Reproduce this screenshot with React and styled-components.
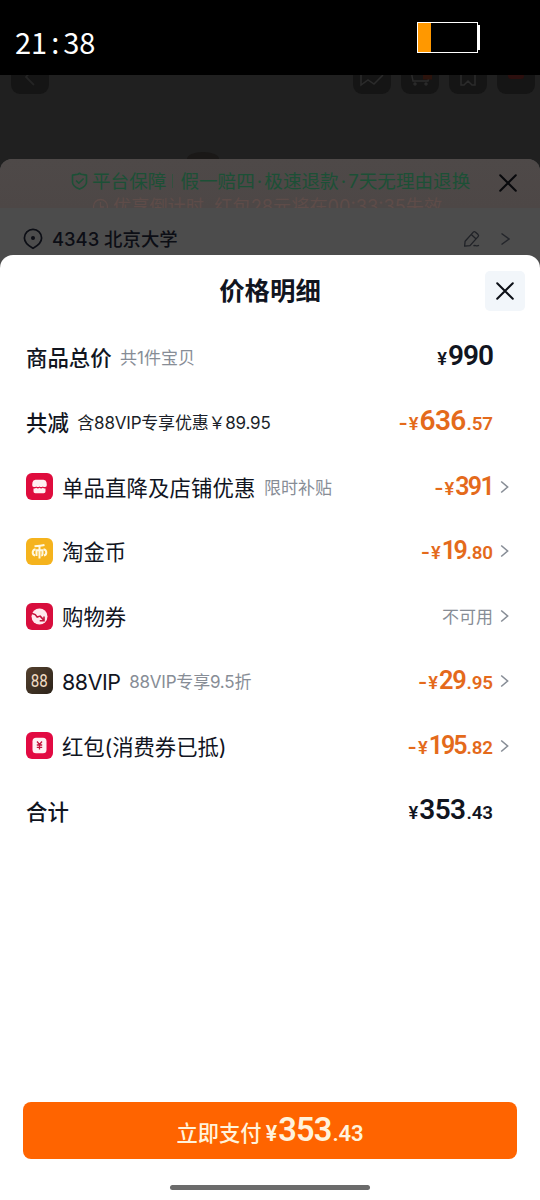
import React from "react"
import styled, { createGlobalStyle } from "styled-components"

const GlobalStyle = createGlobalStyle`
  * {
    box-sizing: border-box;
  }
  body {
    margin: 0;
    background: #000;
    font-family: Inter, "Noto Sans CJK SC", sans-serif;
  }
`

const Screen = styled.div`
  display: flex;
  flex-direction: column;
  width: 540px;
  height: 1200px;
  overflow: hidden;
  background: #202020;
`

const StatusBar = styled.header`
  display: flex;
  justify-content: space-between;
  flex: none;
  height: 75px;
  padding: 22px 60px 0 15px;
  background: #000;
`

const Clock = styled.div`
  display: flex;
  margin-top: -2px;
  color: #fff;
  font-family: "Noto Sans CJK SC", sans-serif;
  font-size: 29px;
  line-height: 42px;
`

const Colon = styled.span`
  width: 16px;
  text-align: center;
`

const Battery = styled.div`
  display: flex;
  align-items: center;
  height: 31px;
`

const BatteryBody = styled.div`
  width: 61px;
  height: 31px;
  border: 1px solid #fff;
`

const BatteryLevel = styled.div`
  width: 13px;
  height: 100%;
  background: #ff9800;
`

const BatteryCap = styled.div`
  width: 2px;
  height: 25px;
  background: #fff;
`

const NavBar = styled.div`
  display: flex;
  gap: 10px;
  flex: none;
  height: 77px;
  padding: 0 5px 0 11px;
`

const NavButton = styled.div`
  display: flex;
  align-items: flex-end;
  justify-content: center;
  width: 38px;
  height: 19px;
  padding-bottom: 7px;
  margin-right: ${({ $push }) => ($push ? "auto" : "0")};
  border-radius: 0 0 9px 9px;
  overflow: hidden;
  background: #151515;
  svg {
    flex: none;
  }
`

const ProductEdge = styled.div`
  flex: none;
  width: 32px;
  height: 7px;
  margin-left: 187px;
  border-radius: 16px 16px 0 0 / 7px 7px 0 0;
  background: #1a1817;
`

const OrderSheet = styled.section`
  display: flex;
  flex-direction: column;
  flex: 1;
  border-radius: 12px 12px 0 0;
  overflow: hidden;
  background: #4c4c4c;
`

const Guarantee = styled.div`
  display: flex;
  justify-content: space-between;
  flex: none;
  height: 49px;
  padding: 0 23px 0 70px;
  overflow: hidden;
  background: linear-gradient(#4e4948, #4d4746);
`

const GuaranteeLines = styled.div`
  white-space: nowrap;
`

const Promise = styled.div`
  display: flex;
  align-items: center;
  height: 34px;
  padding-top: 10px;
  color: #1c5036;
  font-size: 18.6px;
  line-height: 24px;
  svg {
    margin-right: 3px;
  }
`

const Dot = styled.span`
  width: 9.5px;
  text-align: center;
`

const Divider = styled.i`
  width: 1px;
  height: 14px;
  margin: 0 7px 0 6px;
  background: #33503f;
`

const Countdown = styled.div`
  display: flex;
  align-items: center;
  padding: 1px 0 0 22px;
  color: #5e4c49;
  font-size: 18.2px;
  line-height: 24px;
  svg {
    margin-right: 4px;
  }
`

const SheetClose = styled.div`
  display: flex;
  padding-top: 15px;
`

const Address = styled.div`
  display: flex;
  align-items: center;
  flex: none;
  height: 47px;
  padding: 14px 29px 0 23px;
  color: #0c0e15;
  font-size: 18.4px;
  font-weight: 500;
  line-height: 24px;
`

const AddressText = styled.span`
  flex: 1;
  margin-left: 9px;
`

const PriceSheet = styled.main`
  display: flex;
  flex-direction: column;
  flex: 1;
  border-radius: 13px 13px 0 0;
  background: #fff;
`

const TitleBar = styled.div`
  display: grid;
  grid-template-columns: 40px 1fr 40px;
  align-items: center;
  height: 69.6px;
  padding: 2px 15px 0;
`

const Title = styled.h1`
  grid-column: 2;
  margin: 1px 0 0;
  color: #11151f;
  font-size: 25.4px;
  font-weight: 600;
  line-height: 36px;
  text-align: center;
`

const CloseButton = styled.button`
  display: flex;
  align-items: center;
  justify-content: center;
  width: 40px;
  height: 40px;
  padding: 0;
  border: 0;
  border-radius: 5px;
  background: #f2f6fa;
`

const Row = styled.div`
  display: flex;
  align-items: center;
  height: 64.8px;
  padding: 0 31px 0 26px;
  white-space: nowrap;
`

const RowIcon = styled.div`
  display: flex;
  width: 27px;
  height: 27px;
  margin-right: 9px;
`

const Label = styled.span`
  margin-top: 2px;
  color: #11151f;
  font-size: 21.4px;
  font-weight: ${({ $bold }) => ($bold ? 500 : 400)};
  letter-spacing: ${({ $tight }) => $tight || 0}px;
  line-height: 30px;
`

const Note = styled.span`
  margin: 2px 0 0 8.5px;
  color: ${({ $dark }) => ($dark ? "#1b1f29" : "#878d96")};
  font-size: 17px;
  letter-spacing: ${({ $tight }) => $tight || 0}px;
  line-height: 26px;
`

const RowEnd = styled.div`
  display: flex;
  align-items: center;
  margin-left: auto;
`

const ChevronSlot = styled.span`
  display: flex;
  width: 16px;
  padding-left: 7px;
`

const Unavailable = styled.span`
  margin-top: 2px;
  color: #878d96;
  font-size: 17px;
  line-height: 26px;
`

const Amount = styled.span`
  display: flex;
  align-items: baseline;
  margin-top: 2px;
  color: ${({ $color }) => $color};
  font-family: Roboto, sans-serif;
  font-weight: 600;
  line-height: 32px;
`

const Minus = styled.span`
  margin-right: 1px;
  font-family: Inter, sans-serif;
  font-size: 20px;
  font-weight: 600;
`

const Yen = styled.span`
  margin-right: 1px;
  font-size: ${({ $size }) => $size}px;
`

const Whole = styled.span`
  font-size: ${({ $size }) => $size}px;
  letter-spacing: ${({ $tight }) => $tight}px;
`

const Cents = styled.span`
  margin-left: 1px;
  font-size: ${({ $size }) => $size}px;
  letter-spacing: -0.1px;
`

const Footer = styled.footer`
  display: flex;
  flex-direction: column;
  align-items: center;
  margin-top: auto;
  padding: 0 23px 10px;
`

const PayButton = styled.button`
  display: flex;
  align-items: center;
  justify-content: center;
  width: 100%;
  height: 57px;
  margin-bottom: 26px;
  padding: 0;
  border: 0;
  border-radius: 8px;
  background: #ff6400;
  color: #fff3dc;
`

const PayText = styled.span`
  margin: 2px 4px 0 0;
  font-family: "Noto Sans CJK SC", sans-serif;
  font-size: 21.3px;
  font-weight: 500;
  line-height: 30px;
`

const HomeIndicator = styled.div`
  width: 200px;
  height: 5px;
  border-radius: 3px;
  background: #6b6b6b;
`

const Cross = ({ size = 18, color = "#0d1017" }) => (
  <svg width={size} height={size} viewBox="0 0 18 18" fill="none" stroke={color} strokeWidth="2" strokeLinecap="round">
    <path d="M1.2 1.2l15.6 15.6M16.8 1.2L1.2 16.8" />
  </svg>
)

const Chevron = ({ width = 9, height = 14, color = "#878d96" }) => (
  <svg width={width} height={height} viewBox="0 0 9 14" fill="none" stroke={color} strokeWidth="1.6">
    <path d="M1.2 1.5L7.6 7l-6.4 5.5" />
  </svg>
)

const ShieldIcon = () => (
  <svg width="19" height="20" viewBox="0 0 19 20" fill="none" stroke="#1c5036" strokeWidth="1.6" strokeLinejoin="round">
    <path d="M9.5 2.2l1.6 1 5.4.9v7.2c0 3.4-3.4 5.3-7 6.8-3.6-1.5-7-3.4-7-6.8V4.1l5.4-.9z" />
    <path d="M6 9.5l2.8 2.7 4.8-4.7" />
  </svg>
)

const ClockIcon = () => (
  <svg width="17" height="17" viewBox="0 0 17 17" fill="none" stroke="#5e4c49" strokeWidth="1.3">
    <circle cx="8.5" cy="8.5" r="7" />
    <path d="M8.5 4v5H12" />
  </svg>
)

const PinIcon = () => (
  <svg width="20" height="22" viewBox="0 0 20 22" fill="none" stroke="#0c0e15" strokeWidth="1.7" strokeLinejoin="round">
    <path d="M10 20.3c-2-1.1-8.6-4.6-8.6-10.3a8.6 8.6 0 0117.2 0c0 5.7-6.6 9.2-8.6 10.3z" />
    <circle cx="10" cy="10" r="2" fill="#0c0e15" stroke="none" />
  </svg>
)

const EditIcon = () => (
  <svg width="18" height="18" viewBox="0 0 18 18" fill="none" stroke="#202227" strokeWidth="1.3" strokeLinejoin="round">
    <path d="M1.6 16.2l.5-5L10.3 2.1q1-1 2 0l2.8 2.5q1 1 0 2L7 15.6z" />
    <path d="M8.3 4.5l4.6 4.2M10.5 16c1.5-1.5 2.5.8 5.5-.6" />
  </svg>
)

const StoreBadge = () => (
  <svg width="27" height="27" viewBox="0 0 27 27">
    <rect width="27" height="27" rx="6" fill="#df0c3d" />
    <path
      d="M9.5 6.8h8q2.500 0 3 2.500l.3 2.600q.1 1.900-1.600 2.200c-1 .1-1.700-.1-2.400-.7-1 .9-2.300.9-3.300 0-1 .9-2.300.9-3.300 0-.7.6-1.400.8-2.400.7q-1.700-.3-1.600-2.200l.3-2.600q.5-2.500 3-2.500z"
      fill="#fff0f2"
    />
    <path d="M7.500 15.400c1.200.2 2 0 2.700-.6 1 .9 2.300.9 3.300 0 1 .9 2.300.9 3.300 0 .7.6 1.500.8 2.700.6v3q0 1.800-1.800 1.800H9.300q-1.800 0-1.800-1.800z" fill="#fff0f2" />
  </svg>
)

const CoinBadge = () => (
  <svg width="27" height="27" viewBox="0 0 27 27" fill="none" stroke="#fff8df" strokeWidth="2">
    <rect width="27" height="27" rx="6" fill="#f5b31d" stroke="none" />
    <path d="M8.500 8.200c4-.2 6.500-.4 10-1.200M13.500 7.700V20.500M10.500 18v-5.800h6V16q0 1.500-1.300 1.500" />
    <path d="M9.500 11.300c-2.100.4-2.800 1.900-2.800 3.300 0 1.600 1 2.700 2.400 3M17.500 11.300c2.100.4 2.800 1.900 2.800 3.300 0 1.600-1 2.700-2.400 3" />
  </svg>
)

const CouponBadge = () => (
  <svg width="27" height="27" viewBox="0 0 27 27">
    <rect width="27" height="27" rx="6" fill="#d80e3d" />
    <circle cx="13.5" cy="13.5" r="8" fill="#ffe9ee" />
    <path d="M5.500 10.200l3.700 1.400 2 2.500 3-1 3.600 4" fill="none" stroke="#c4143d" strokeWidth="1.6" />
    <path d="M18 13.500v4.300h-4.300" fill="none" stroke="#c4143d" strokeWidth="1.6" />
  </svg>
)

const VipBadge = () => (
  <svg width="27" height="27" viewBox="0 0 27 27">
    <defs>
      <linearGradient id="vip" x1="0" y1="0" x2="1" y2="1">
        <stop offset="0" stopColor="#54412e" />
        <stop offset="1" stopColor="#2c231a" />
      </linearGradient>
    </defs>
    <rect width="27" height="27" rx="6" fill="url(#vip)" />
    <text x="13.3" y="19.5" textAnchor="middle" textLength="17" lengthAdjust="spacingAndGlyphs" fontFamily="Roboto, sans-serif" fontSize="18" fill="#f1dcc4">
      88
    </text>
  </svg>
)

const PacketBadge = () => (
  <svg width="27" height="27" viewBox="0 0 27 27">
    <rect width="27" height="27" rx="6" fill="#e20a42" />
    <rect x="6.5" y="5.8" width="14" height="15.400" rx="3.5" fill="#fff0f3" />
    <path d="M11 9.500l2.500 3 2.500-3M10.800 13h5.400M10.800 15.300h5.400M13.500 12.500v5" fill="none" stroke="#c4143d" strokeWidth="1.3" />
  </svg>
)

const ORANGE = "#e46a1b"
const INK = "#11151f"

const rows = [
  { label: "商品总价", bold: true, note: "共1件宝贝", whole: "990", size: 28, tight: -1 },
  { label: "共减", bold: true, note: "含88VIP专享优惠￥89.95", dark: true, noteTight: -0.2, minus: true, whole: "636", cents: ".57", size: 28, tight: -0.7 },
  { icon: StoreBadge, label: "单品直降及店铺优惠", labelTight: 0.1, note: "限时补贴", minus: true, whole: "391", size: 25, tight: -1.7, link: true },
  { icon: CoinBadge, label: "淘金币", minus: true, whole: "19", cents: ".80", size: 25, tight: -2.4, link: true },
  { icon: CouponBadge, label: "购物券", unavailable: "不可用", link: true },
  { icon: VipBadge, label: "88VIP", labelTight: -0.4, note: "88VIP专享9.5折", noteTight: -0.2, minus: true, whole: "29", cents: ".95", size: 25.4, tight: -1.3, link: true },
  { icon: PacketBadge, label: "红包(消费券已抵)", labelTight: -0.1, minus: true, whole: "195", cents: ".82", size: 25, tight: -2, link: true },
  { label: "合计", bold: true, whole: "353", cents: ".43", size: 28, tight: -0.6 },
]

const Price = ({ minus, whole, cents, size, tight, color, small = 18.8 }) => (
  <Amount $color={color}>
    {minus && <Minus>-</Minus>}
    <Yen $size={small - 0.5}>¥</Yen>
    <Whole $size={size} $tight={tight}>{whole}</Whole>
    {cents && <Cents $size={small}>{cents}</Cents>}
  </Amount>
)

const PriceRow = ({ icon: Icon, label, labelTight, bold, note, dark, noteTight, unavailable, link, ...price }) => (
  <Row>
    {Icon && <RowIcon><Icon /></RowIcon>}
    <Label $bold={bold} $tight={labelTight}>{label}</Label>
    {note && <Note $dark={dark} $tight={noteTight}>{note}</Note>}
    <RowEnd>
      {unavailable ? (
        <Unavailable>{unavailable}</Unavailable>
      ) : (
        <Price {...price} color={price.minus ? ORANGE : INK} />
      )}
      <ChevronSlot>{link && <Chevron />}</ChevronSlot>
    </RowEnd>
  </Row>
)

const App = () => (
  <React.Fragment>
    <GlobalStyle />
    <Screen>
      <StatusBar>
        <Clock>
          21<Colon>:</Colon>38
        </Clock>
        <Battery>
          <BatteryBody>
            <BatteryLevel />
          </BatteryBody>
          <BatteryCap />
        </Battery>
      </StatusBar>
      <NavBar>
        <NavButton $push>
          <svg width="12" height="20" fill="none" stroke="#242424" strokeWidth="1.8">
            <path d="M9 2L2 10l8 8" />
          </svg>
        </NavButton>
        <NavButton>
          <svg width="26" height="18" fill="none" stroke="#2b2b2b" strokeWidth="1.5">
            <path d="M2 6v10l7-5 6 4 9-9" />
          </svg>
        </NavButton>
        <NavButton>
          <svg width="24" height="20" fill="none" stroke="#2b2b2b" strokeWidth="1.5">
            <path d="M3 4l2 10h15l2-8" />
            <circle cx="7" cy="17" r="1" />
            <circle cx="18" cy="17" r="1" />
            <path d="M15 10h9" stroke="#2c130c" strokeWidth="5" />
          </svg>
        </NavButton>
        <NavButton>
          <svg width="18" height="20" fill="none" stroke="#2b2b2b" strokeWidth="1.5">
            <path d="M2 2v16h3l4-4 4 4h3V2" />
          </svg>
        </NavButton>
        <NavButton>
          <svg width="24" height="20">
            <rect x="4" y="6" width="16" height="6" rx="3" fill="#2c0f0e" />
          </svg>
        </NavButton>
      </NavBar>
      <ProductEdge />
      <OrderSheet>
        <Guarantee>
          <GuaranteeLines>
            <Promise>
              <ShieldIcon />
              平台保障
              <Divider />
              假一赔四<Dot>·</Dot>极速退款<Dot>·</Dot>7天无理由退换
            </Promise>
            <Countdown>
              <ClockIcon />
              优享倒计时, 红包28元将在00:33:35失效
            </Countdown>
          </GuaranteeLines>
          <SheetClose>
            <Cross color="#08090c" />
          </SheetClose>
        </Guarantee>
        <Address>
          <PinIcon />
          <AddressText>4343 北京大学</AddressText>
          <EditIcon />
          <svg width="30" height="14" fill="none" stroke="#24262b" strokeWidth="1.5">
            <path d="M20.5 1.5L28 7l-7.5 5.5" />
          </svg>
        </Address>
        <PriceSheet>
          <TitleBar>
            <Title>价格明细</Title>
            <CloseButton aria-label="关闭">
              <Cross />
            </CloseButton>
          </TitleBar>
          {rows.map((row) => (
            <PriceRow key={row.label} {...row} />
          ))}
          <Footer>
            <PayButton>
              <PayText>立即支付</PayText>
              <Price whole="353" cents=".43" size={32.5} tight={-0.8} small={22} color="#fff3dc" />
            </PayButton>
            <HomeIndicator />
          </Footer>
        </PriceSheet>
      </OrderSheet>
    </Screen>
  </React.Fragment>
)

export default App
